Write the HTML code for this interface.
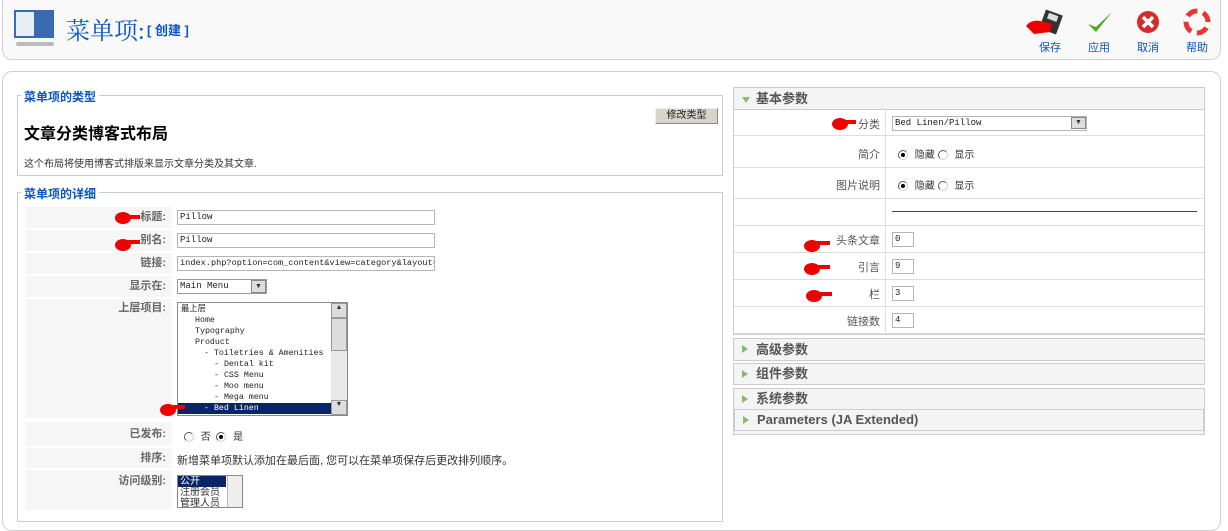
<!DOCTYPE html>
<html><head><meta charset="utf-8"><style>
*{margin:0;padding:0;box-sizing:border-box}
body{width:1228px;height:508px;overflow:hidden;background:#fff;font-family:"Liberation Sans","Noto Sans CJK SC",sans-serif;font-size:11px;color:#333;position:relative}
.abs{position:absolute}
.hdr{left:2px;top:-8px;width:1219px;height:68px;border:1px solid #d0d0d0;border-radius:10px;background:#f9f9f9}
.content{left:2px;top:71px;width:1219px;height:460px;border:1px solid #d0d0d0;border-radius:10px;background:#fff}
.fs{border:1px solid #ccc}
.legend{background:#fff;color:#0b55c4;font-weight:bold;font-size:12px;padding:0 3px}
.lab{background:#f6f6f6;text-align:right;color:#666;font-weight:bold;font-size:11px;padding-right:6px;left:25px;width:147px}
.inp{border:1px solid #b5b5b5;background:#fff;font-family:"Liberation Mono",monospace;font-size:9px;padding-left:2px;line-height:13px;height:15px;color:#222;overflow:hidden;white-space:nowrap}
.rl{background:#fff;border-bottom:1px solid #ddd}
.rlab{text-align:right;color:#555;font-size:11px;left:734px;width:146px}
.acc{left:733px;width:472px;border:1px solid #ccc;background:#f4f4f4;font-size:13px;font-weight:bold;color:#555;padding-left:22px}
.tri{position:absolute;left:8px;top:6px;width:0;height:0;border-left:6px solid #8ab870;border-top:4px solid transparent;border-bottom:4px solid transparent}
.red{position:absolute;background:#e00;border-radius:50%}
.radio{display:inline-block;width:10px;height:10px;border:1px solid #555;border-radius:50%;vertical-align:middle;position:relative;border-right-color:#ccc;border-bottom-color:#ccc;margin-right:4px}
.radio.on:after{content:"";position:absolute;left:2px;top:2px;width:4px;height:4px;background:#000;border-radius:50%}
.tb{font-size:11px;color:#0b55c4;text-align:center;width:40px}
</style></head><body>
<div class="abs hdr"></div>
<div class="abs" style="left:14px;top:10px;width:40px;height:28px;background:#3a6bb0"></div>
<div class="abs" style="left:16px;top:12px;width:18px;height:24px;background:#e8eef5"></div>
<div class="abs" style="left:16px;top:42px;width:38px;height:4px;background:#bbb;border-radius:3px"></div>
<div class="abs" style="left:66px;top:11px;font-size:24px;color:#0b55c4;font-family:'Liberation Serif','Noto Serif CJK SC',serif;">菜单项:</div>
<div class="abs" style="left:147px;top:20px;font-size:13px;color:#0b55c4;font-weight:bold">[ 创建 ]</div>
<svg class="abs" style="left:1022px;top:8px" width="200" height="30">
<rect x="20" y="4" width="18" height="20" fill="#333" transform="rotate(20 29 14)"/><rect x="24" y="6" width="10" height="6" fill="#ddd" transform="rotate(20 29 14)"/>
<path d="M4 18 Q10 10 22 14 L30 16 L28 24 L12 26 Z" fill="#e00"/>
<path d="M66 16 L74 24 L90 4 L74 19 Z" fill="#4caa22"/>
<circle cx="126" cy="14" r="11" fill="#d62b2b"/><path d="M121 9 L131 19 M131 9 L121 19" stroke="#fff" stroke-width="3.5"/>
<circle cx="175" cy="14" r="11" fill="none" stroke="#e33" stroke-width="5"/><circle cx="175" cy="14" r="11" fill="none" stroke="#fff" stroke-width="5" stroke-dasharray="6 11.3"/>
</svg>
<div class="abs tb" style="left:1030px;top:39px">保存</div>
<div class="abs tb" style="left:1079px;top:39px">应用</div>
<div class="abs tb" style="left:1128px;top:39px">取消</div>
<div class="abs tb" style="left:1177px;top:39px">帮助</div>

<div class="abs content"></div>
<div class="abs fs" style="left:17px;top:95px;width:706px;height:81px"></div>
<div class="abs legend" style="left:21px;top:88px">菜单项的类型</div>
<div class="abs" style="left:24px;top:120px;font-size:16px;font-weight:bold;color:#000">文章分类博客式布局</div>
<div class="abs" style="left:24px;top:155px;font-size:10px;color:#333">这个布局将使用博客式排版来显示文章分类及其文章.</div>
<div class="abs" style="left:655px;top:108px;width:63px;height:16px;background:#d8d4cc;border:1px solid #888;border-top-color:#eee;border-left-color:#eee;font-size:10px;text-align:center;line-height:14px;color:#222">修改类型</div>
<div class="abs fs" style="left:17px;top:192px;width:706px;height:330px"></div>
<div class="abs legend" style="left:21px;top:185px">菜单项的详细</div>
<div class="abs lab" style="top:207px;height:21px;line-height:21px">标题:</div>
<div class="abs lab" style="top:230px;height:21px;line-height:21px">别名:</div>
<div class="abs lab" style="top:253px;height:21px;line-height:21px">链接:</div>
<div class="abs lab" style="top:276px;height:21px;line-height:21px">显示在:</div>
<div class="abs lab" style="top:299px;height:119px;line-height:18px">上层项目:</div>
<div class="abs lab" style="top:422px;height:24px;line-height:24px">已发布:</div>
<div class="abs lab" style="top:448px;height:20px;line-height:20px">排序:</div>
<div class="abs lab" style="top:470px;height:40px;line-height:22px">访问级别:</div>
<div class="abs inp" style="left:177px;top:210px;width:258px">Pillow</div>
<div class="abs inp" style="left:177px;top:233px;width:258px">Pillow</div>
<div class="abs inp" style="left:177px;top:256px;width:258px;font-size:8.6px">index.php?option=com_content&amp;view=category&amp;layout=b</div>
<div class="abs inp" style="left:177px;top:279px;width:90px;border-color:#999">Main Menu</div>
<div class="abs" style="left:251px;top:280px;width:15px;height:13px;background:#ddd;border:1px solid #888;font-size:7px;text-align:center;line-height:11px">▼</div>
<div class="abs" style="left:177px;top:302px;width:171px;height:114px;border:1px solid #888;background:#fff;font-family:'Liberation Mono','Noto Sans CJK SC',monospace;font-size:8.3px;line-height:11px;color:#222;overflow:hidden;padding-top:1px">
<div style="padding-left:3px">最上层</div>
<div style="padding-left:17px">Home</div>
<div style="padding-left:17px">Typography</div>
<div style="padding-left:17px">Product</div>
<div style="padding-left:26px;white-space:nowrap">- Toiletries &amp; Amenities</div>
<div style="padding-left:36px">- Dental kit</div>
<div style="padding-left:36px">- CSS Menu</div>
<div style="padding-left:36px">- Moo menu</div>
<div style="padding-left:36px">- Mega menu</div>
<div style="padding-left:26px;background:#0a246a;color:#fff;width:153px">- Bed Linen</div>
</div>
<div class="abs" style="left:331px;top:303px;width:16px;height:112px;background:#e8e8e8"></div>
<div class="abs" style="left:331px;top:303px;width:16px;height:15px;background:#ddd;border:1px solid #999;font-size:7px;text-align:center">▲</div>
<div class="abs" style="left:331px;top:318px;width:16px;height:33px;background:#ddd;border:1px solid #999"></div>
<div class="abs" style="left:331px;top:400px;width:16px;height:15px;background:#ddd;border:1px solid #999;font-size:7px;text-align:center">▼</div>
<div class="abs" style="left:184px;top:428px;font-size:10px"><span class="radio"></span> 否 &nbsp;<span class="radio on"></span> 是</div>
<div class="abs" style="left:177px;top:452px;font-size:11px;color:#333">新增菜单项默认添加在最后面, 您可以在菜单项保存后更改排列顺序。</div>
<div class="abs" style="left:177px;top:475px;width:66px;height:33px;border:1px solid #888;background:#fff;font-size:10px;line-height:11px;overflow:hidden">
<div style="background:#0a246a;color:#fff;width:48px;padding-left:2px">公开</div><div style="padding-left:2px">注册会员</div><div style="padding-left:2px">管理人员</div></div>
<div class="abs" style="left:227px;top:476px;width:15px;height:31px;background:#eee;border-left:1px solid #bbb"></div>
<div class="abs" style="left:733px;top:87px;width:472px;height:248px;border:1px solid #ccc;background:#fff"></div>
<div class="abs acc" style="top:87px;height:23px;line-height:21px"><span class="tri" style="border-left:4px solid transparent;border-right:4px solid transparent;border-top:6px solid #8ab870;border-bottom:0;top:9px"></span>基本参数</div>
<div class="abs rl" style="left:734px;top:110px;width:470px;height:26px"></div>
<div class="abs rl" style="left:734px;top:136px;width:470px;height:32px"></div>
<div class="abs rl" style="left:734px;top:168px;width:470px;height:31px"></div>
<div class="abs rl" style="left:734px;top:199px;width:470px;height:27px"></div>
<div class="abs rl" style="left:734px;top:226px;width:470px;height:27px"></div>
<div class="abs rl" style="left:734px;top:253px;width:470px;height:27px"></div>
<div class="abs rl" style="left:734px;top:280px;width:470px;height:27px"></div>
<div class="abs rl" style="left:734px;top:307px;width:470px;height:27px"></div>
<div class="abs" style="left:885px;top:110px;width:1px;height:224px;background:#ddd"></div>
<div class="abs rlab" style="top:116px">分类</div>
<div class="abs rlab" style="top:146px">简介</div>
<div class="abs rlab" style="top:177px">图片说明</div>
<div class="abs rlab" style="top:232px">头条文章</div>
<div class="abs rlab" style="top:259px">引言</div>
<div class="abs rlab" style="top:286px">栏</div>
<div class="abs rlab" style="top:313px">链接数</div>
<div class="abs inp" style="left:892px;top:116px;width:195px;font-size:9px">Bed Linen/Pillow</div>
<div class="abs" style="left:1071px;top:117px;width:15px;height:12px;background:#ddd;border:1px solid #888;font-size:7px;text-align:center;line-height:10px">▼</div>
<div class="abs" style="left:898px;top:146px;font-size:10px"><span class="radio on"></span> 隐藏 <span class="radio"></span> 显示</div>
<div class="abs" style="left:898px;top:177px;font-size:10px"><span class="radio on"></span> 隐藏 <span class="radio"></span> 显示</div>
<div class="abs" style="left:892px;top:211px;width:305px;height:1px;background:#444"></div>
<div class="abs inp" style="left:892px;top:232px;width:22px">0</div>
<div class="abs inp" style="left:892px;top:259px;width:22px">9</div>
<div class="abs inp" style="left:892px;top:286px;width:22px">3</div>
<div class="abs inp" style="left:892px;top:313px;width:22px">4</div>
<div class="abs acc" style="top:338px;height:23px;line-height:21px"><span class="tri"></span>高级参数</div>
<div class="abs acc" style="top:363px;height:22px;line-height:20px"><span class="tri"></span>组件参数</div>
<div class="abs acc" style="top:388px;height:47px;line-height:20px"><span class="tri"></span>系统参数</div>
<div class="abs acc" style="left:734px;width:470px;top:409px;height:22px;line-height:20px"><span class="tri"></span>Parameters (JA Extended)</div>
<div class="red" style="left:115px;top:212px;width:16px;height:12px"></div><div class="abs" style="left:125px;top:215px;width:15px;height:4px;background:#e00"></div>
<div class="red" style="left:115px;top:239px;width:16px;height:12px"></div><div class="abs" style="left:125px;top:240px;width:15px;height:4px;background:#e00"></div>
<div class="red" style="left:160px;top:404px;width:16px;height:12px"></div><div class="abs" style="left:170px;top:405px;width:15px;height:4px;background:#e00"></div>
<div class="red" style="left:832px;top:118px;width:16px;height:12px"></div><div class="abs" style="left:842px;top:120px;width:14px;height:4px;background:#e00"></div>
<div class="red" style="left:804px;top:240px;width:16px;height:12px"></div><div class="abs" style="left:814px;top:241px;width:16px;height:4px;background:#e00"></div>
<div class="red" style="left:804px;top:263px;width:16px;height:12px"></div><div class="abs" style="left:814px;top:265px;width:16px;height:4px;background:#e00"></div>
<div class="red" style="left:806px;top:290px;width:16px;height:12px"></div><div class="abs" style="left:816px;top:292px;width:16px;height:4px;background:#e00"></div>
</body></html>
